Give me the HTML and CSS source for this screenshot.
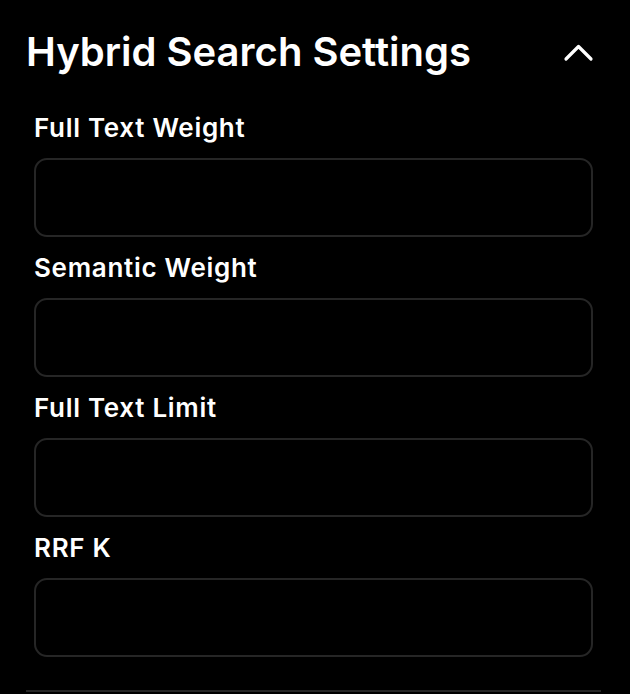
FILE: index.html
```html
<!DOCTYPE html>
<html>
<head>
<meta charset="utf-8">
<link rel="stylesheet" href="styles.css">
</head>
<body>
<section class="panel">
  <div class="header">
    <h2 class="title">Hybrid Search Settings</h2>
    <button class="toggle" aria-label="Collapse">
      <svg width="31" height="19" viewBox="0 0 31 19"><path d="M3 16 L15.5 3.5 L28 16" fill="none" stroke="#fff" stroke-width="3.2" stroke-linecap="round" stroke-linejoin="round"/></svg>
    </button>
  </div>
  <div class="fields">
    <div class="field">
      <label class="label">Full Text Weight</label>
      <input class="input" type="text">
    </div>
    <div class="field">
      <label class="label">Semantic Weight</label>
      <input class="input" type="text">
    </div>
    <div class="field">
      <label class="label">Full Text Limit</label>
      <input class="input" type="text">
    </div>
    <div class="field">
      <label class="label">RRF K</label>
      <input class="input" type="text">
    </div>
  </div>
  <div class="divider"></div>
</section>
</body>
</html>
```
FILE: styles.css
```css
html, body {
  margin: 0;
  padding: 0;
  background: #000;
}
body {
  font-family: Inter, "Noto Sans", sans-serif;
  color: #fff;
}
.panel {
  margin-left: 26px;
  width: 575px;
}
.header {
  display: flex;
  align-items: center;
  justify-content: space-between;
  padding-top: 28px;
}
.title {
  margin: 0;
  font-size: 40px;
  line-height: 48px;
  font-weight: 600;
  letter-spacing: 0;
}
.toggle {
  background: none;
  border: 0;
  padding: 0;
  margin-right: 7px;
  display: flex;
}
.fields {
  display: flex;
  flex-direction: column;
  padding: 34px 8px 0 8px;
  gap: 13px;
}
.field {
  display: flex;
  flex-direction: column;
  gap: 12px;
}
.label {
  font-size: 26px;
  line-height: 36px;
  font-weight: 600;
  letter-spacing: 0.7px;
}
.input {
  box-sizing: border-box;
  height: 79px;
  width: 100%;
  margin: 0;
  background: #000;
  border: 2px solid #262626;
  border-radius: 13px;
  color: #fff;
  font: inherit;
  padding: 0 16px;
}
.divider {
  margin-top: 33px;
  height: 2px;
  background: #262626;
}
```
